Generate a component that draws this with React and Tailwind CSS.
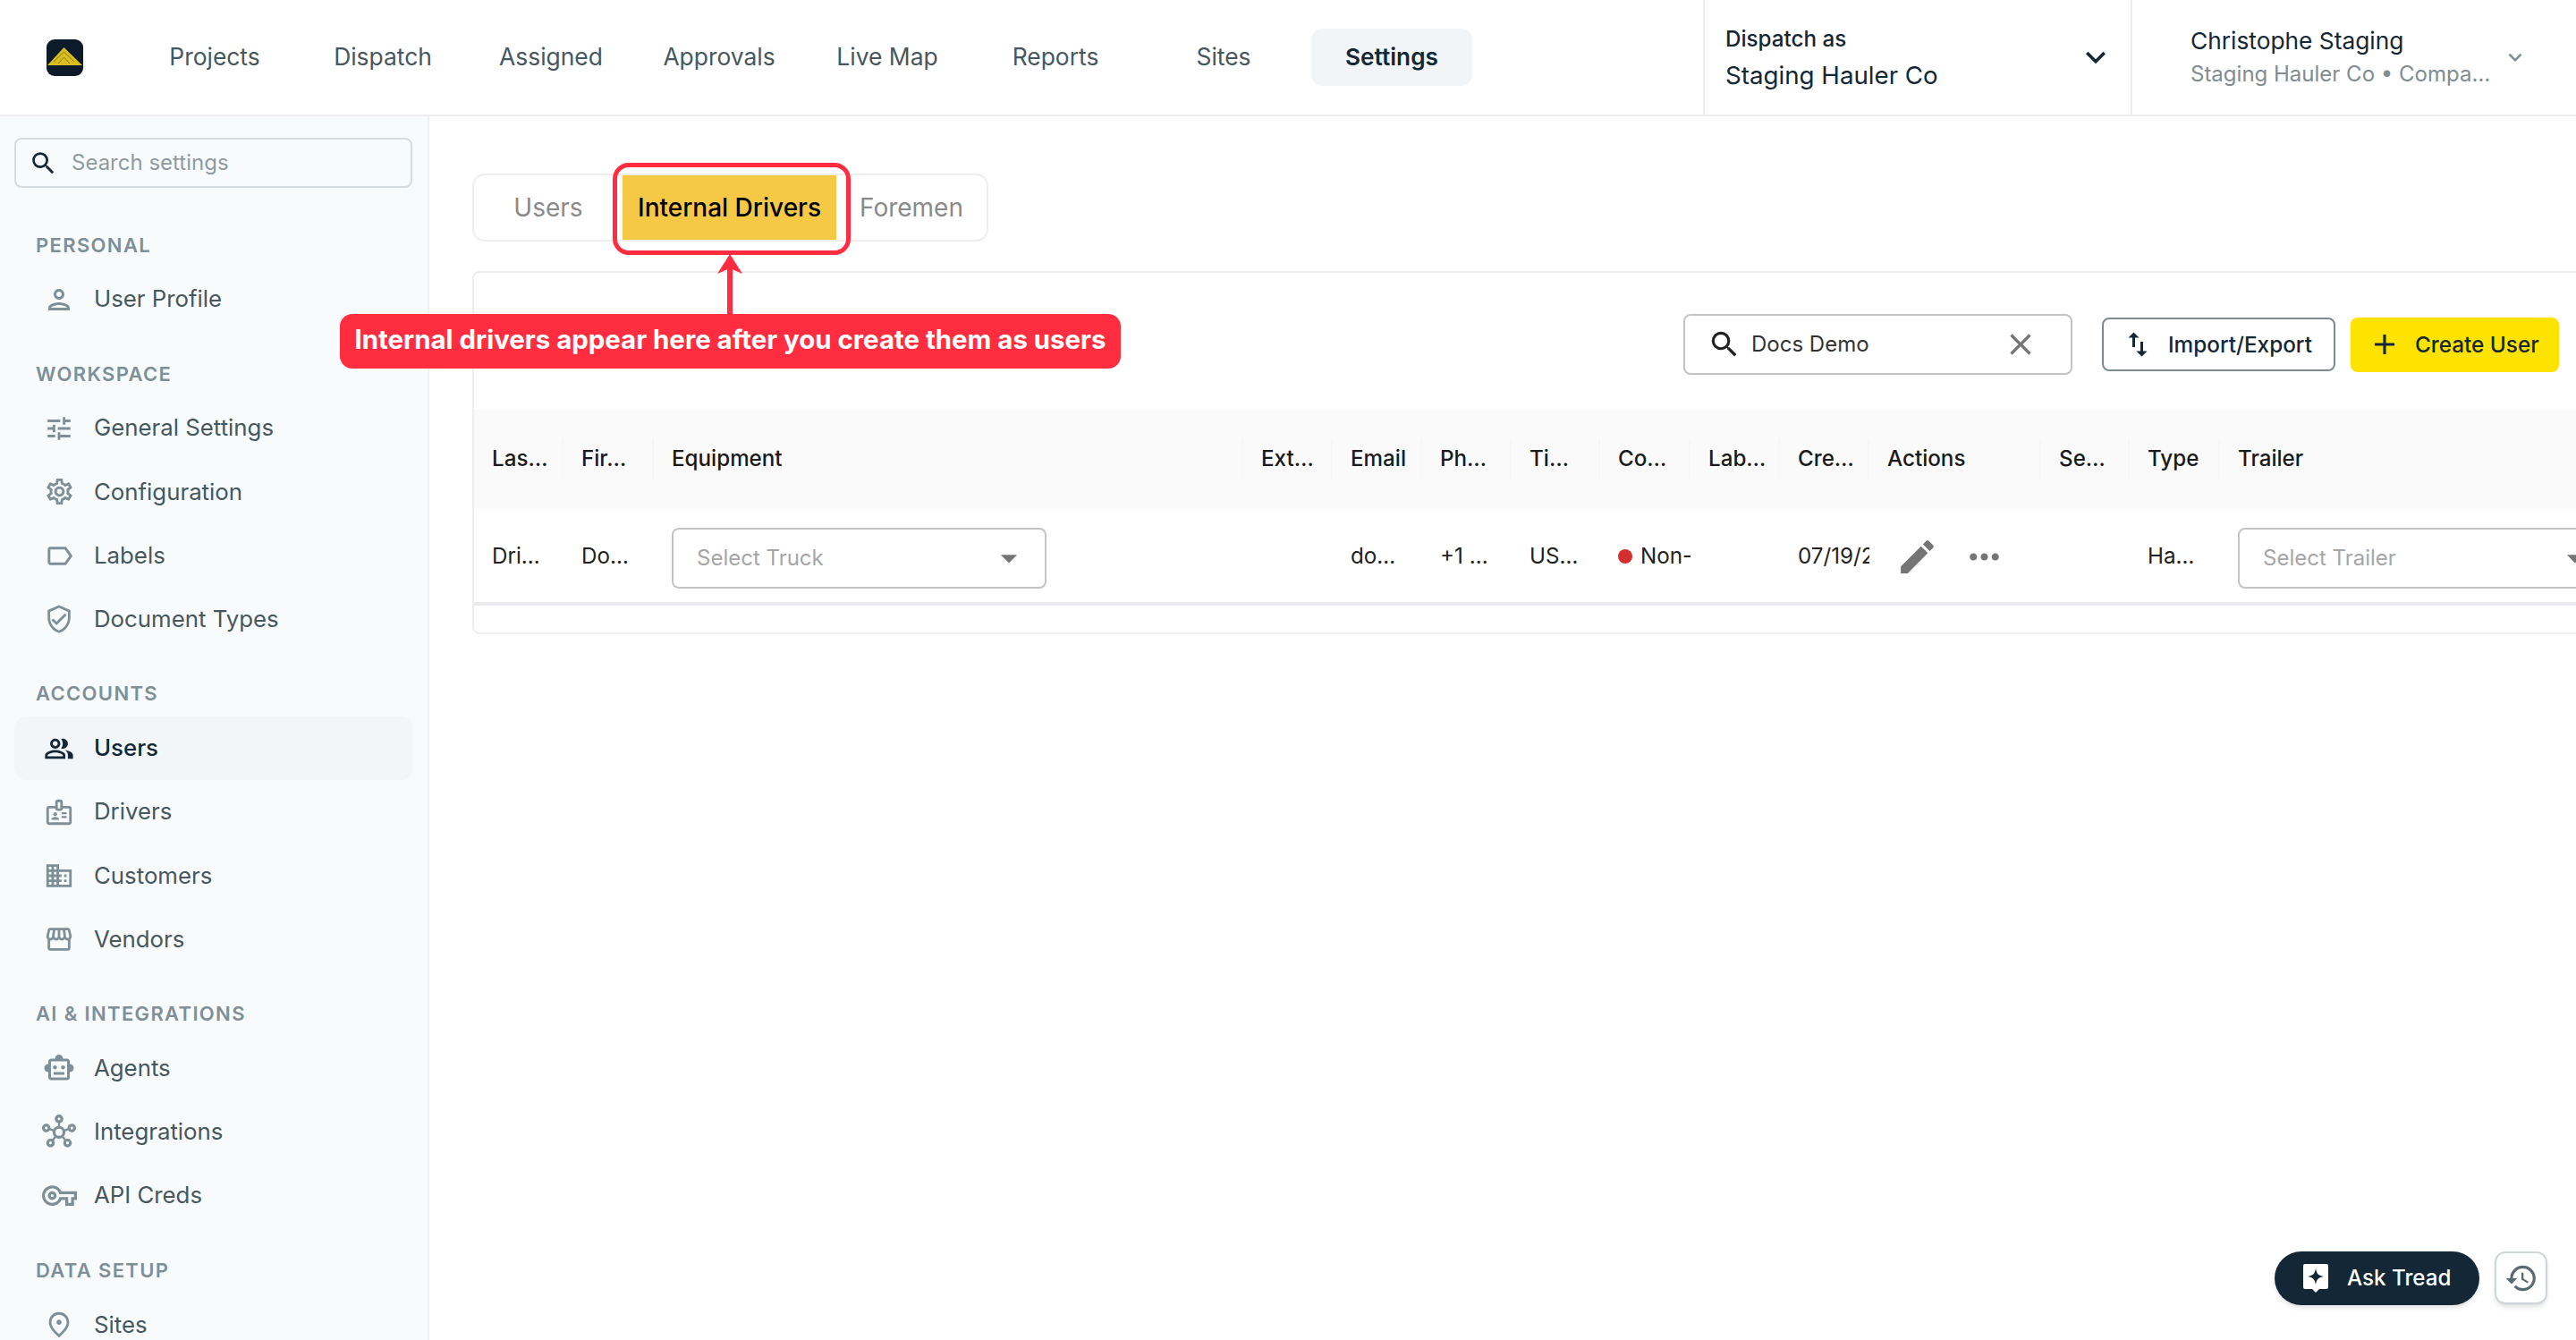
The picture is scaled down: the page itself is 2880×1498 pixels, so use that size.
import React from 'react';
import {
  MdOutlinePerson, MdOutlineTune, MdOutlineSettings, MdOutlineLabel, MdOutlineVerifiedUser,
  MdOutlinePeopleAlt, MdOutlineBadge, MdDomain, MdOutlineStorefront, MdOutlineSmartToy,
  MdOutlineHub, MdOutlineVpnKey, MdOutlinePlace, MdSearch, MdClose, MdAdd, MdImportExport,
  MdArrowDropDown, MdEdit, MdMoreHoriz, MdHistory, MdKeyboardArrowDown,
} from 'react-icons/md';

const NAV = ['Projects', 'Dispatch', 'Assigned', 'Approvals', 'Live Map', 'Reports', 'Sites', 'Settings'];

const SECTIONS = [
  { title: 'PERSONAL', items: [{ label: 'User Profile', icon: MdOutlinePerson, size: 'size-[36px]' }] },
  {
    title: 'WORKSPACE',
    items: [
      { label: 'General Settings', icon: MdOutlineTune },
      { label: 'Configuration', icon: MdOutlineSettings, size: 'size-[35px]' },
      { label: 'Labels', icon: MdOutlineLabel, size: 'size-[35px]' },
      { label: 'Document Types', icon: MdOutlineVerifiedUser },
    ],
  },
  {
    title: 'ACCOUNTS',
    items: [
      { label: 'Users', icon: MdOutlinePeopleAlt, active: true },
      { label: 'Drivers', icon: MdOutlineBadge },
      { label: 'Customers', icon: MdDomain },
      { label: 'Vendors', icon: MdOutlineStorefront },
    ],
  },
  {
    title: 'AI & INTEGRATIONS',
    items: [
      { label: 'Agents', icon: MdOutlineSmartToy, size: 'size-[36px]' },
      { label: 'Integrations', icon: MdOutlineHub, size: 'size-[38px]' },
      { label: 'API Creds', icon: MdOutlineVpnKey, size: 'size-[39px]' },
    ],
  },
  { title: 'DATA SETUP', items: [{ label: 'Sites', icon: MdOutlinePlace }] },
];

const COLS = [
  { head: 'Las…', w: 'w-[100px]', cell: 'Dri…' },
  { head: 'Fir…', w: 'w-[101px]', cell: 'Do…' },
  { head: 'Equipment', w: 'w-[659px]', select: 'Select Truck' },
  { head: 'Ext…', w: 'w-[100px]' },
  { head: 'Email', w: 'w-[100px]', cell: 'do…' },
  { head: 'Ph…', w: 'w-[100px]', cell: '+1 …' },
  { head: 'Ti…', w: 'w-[99px]', cell: 'US…' },
  { head: 'Co…', w: 'w-[101px]', status: 'Non-compliant' },
  { head: 'Lab…', w: 'w-[100px]' },
  { head: 'Cre…', w: 'w-[100px]', clip: '07/19/2025' },
  { head: 'Actions', w: 'w-[192px]', actions: true },
  { head: 'Se…', w: 'w-[99px]' },
  { head: 'Type', w: 'w-[101px]', cell: 'Ha…' },
  { head: 'Trailer', w: 'w-[460px]', select: 'Select Trailer', last: true },
];

function SelectBox({ text }) {
  return (
    <div className="flex h-[68px] w-[419px] shrink-0 items-center justify-between rounded-[8px] border-2 border-[#c4c4c4] pl-[26px] pr-[18px]">
      <span className="text-[24px] text-[#a6a6a6]">{text}</span>
      <MdArrowDropDown className="size-[44px] text-[#757575]" />
    </div>
  );
}

function BodyCell({ col }) {
  if (col.select) return <div className={`${col.w} shrink-0 pl-[20px]`}><SelectBox text={col.select} /></div>;
  if (col.actions) {
    return (
      <div className={`${col.w} -mt-[2px] flex shrink-0 items-center gap-[26px] pl-[29px]`}>
        <MdEdit className="size-[49px] text-[#757575]" />
        <MdMoreHoriz className="size-[49px] text-[#757575]" />
      </div>
    );
  }
  if (col.status) {
    return (
      <div className={`${col.w} -mt-[2px] flex shrink-0 items-center gap-[9px] overflow-hidden whitespace-nowrap pl-[20px] text-[24.2px] text-[#222]`}>
        <span className="size-[16px] shrink-0 rounded-full bg-[#d32f2f]" />
        <span>{col.status}</span>
      </div>
    );
  }
  return (
    <div className={`${col.w} -mt-[2px] shrink-0 overflow-hidden whitespace-nowrap pl-[20px] text-[24.2px] text-[#222]`}>
      {col.cell || col.clip}
    </div>
  );
}

export default function App() {
  return (
    <div className="relative flex h-screen w-screen flex-col overflow-hidden bg-white font-['Inter',sans-serif]">
      {/* top bar */}
      <header className="flex h-[130px] shrink-0 items-stretch border-b-2 border-[#eeeeee]">
        <div className="flex items-center pl-[52px]">
          <div className="flex h-[41px] w-[41px] items-center justify-center rounded-[9px] bg-[#0c1a2a]">
            <svg viewBox="0 0 41 41" className="size-full">
              <path d="M19.5 9 L40 29 L1 29 Z" fill="#d9bd1e" />
              <path d="M19.5 14 L31 25 M19.5 14 L8 25 M19.5 20 L26 27 M19.5 20 L13 27" stroke="#8f7d12" strokeWidth="1" fill="none" />
            </svg>
          </div>
        </div>
        <nav className="ml-[53px] flex items-center">
          {NAV.map((n) => (
            <div key={n} className="flex w-[188px] justify-center">
              {n === 'Settings' ? (
                <span className="flex h-[64px] w-[180px] items-center justify-center rounded-[12px] bg-[#f1f5f8] text-[26.2px] font-semibold text-[#132736]">{n}</span>
              ) : (
                <span className="text-[26.4px] text-[#46575f]">{n}</span>
              )}
            </div>
          ))}
        </nav>
        <div className="ml-auto flex w-[480px] items-center border-x-2 border-[#eeeeee] pl-[23px] pr-[17px]">
          <div className="flex-1">
            <div className="mt-[1px] text-[24.2px] font-medium leading-[30px] text-[#132736]">Dispatch as</div>
            <div className="mt-[8px] text-[27.7px] leading-[34px] text-[#132736]">Staging Hauler Co</div>
          </div>
          <MdKeyboardArrowDown className="size-[44px] text-[#132736]" />
        </div>
        <div className="flex w-[496px] items-center pl-[65px]">
          <div className="w-[340px]">
            <div className="text-[26.3px] leading-[32px] text-[#132736]">Christophe Staging</div>
            <div className="mt-[6px] whitespace-nowrap text-[24px] leading-[30px] text-[#7f8c92]">Staging Hauler Co • Compa…</div>
          </div>
          <MdKeyboardArrowDown className="ml-[8px] size-[30px] text-[#7f8c92]" />
        </div>
      </header>

      <div className="flex min-h-0 flex-1">
        {/* settings sidebar */}
        <aside className="w-[480px] shrink-0 overflow-hidden border-r-2 border-[#eef0f1] bg-[#f8fbfc] px-[16px] pt-[24px]">
          <div className="flex h-[56px] w-[445px] items-center rounded-[8px] border-2 border-[#d5dcdf] pl-[14px]">
            <MdSearch className="size-[33px] text-[#132736]" />
            <span className="ml-[15px] text-[24px] text-[#8f9ba1]">Search settings</span>
          </div>
          <div className="mt-[17px]">
            {SECTIONS.map((s, i) => (
              <section key={s.title} className={i === 0 ? 'mt-[39px]' : 'mt-[23px]'}>
                <div className="flex h-[50px] items-center pl-[24px] text-[22px] font-semibold tracking-[1.35px] text-[#7f8f97]">{s.title}</div>
                {s.items.map((it) => {
                  const Icon = it.icon;
                  return (
                    <div
                      key={it.label}
                      className={`flex h-[71.2px] items-center rounded-[14px] pl-[33px] ${it.active ? 'bg-[#f2f6f9] text-[#132736]' : 'text-[#46575f]'}`}
                    >
                      <span className="flex w-[34px] shrink-0 justify-center">
                        <Icon className={`${it.size || 'size-[34px]'} shrink-0 ${it.active ? 'text-[#132736]' : 'text-[#7f8f97]'}`} />
                      </span>
                      <span className={`ml-[22px] text-[25.8px] ${it.active ? 'font-medium' : ''}`}>{it.label}</span>
                    </div>
                  );
                })}
              </section>
            ))}
          </div>
        </aside>

        {/* content */}
        <main className="min-w-0 flex-1 overflow-hidden pl-[48px] pt-[64px]">
          <div className="flex h-[76px] w-[577px] items-stretch rounded-[14px] border-2 border-[#eeeeee]">
            <div className="flex w-[166px] items-center justify-center text-[28px] text-[#8a8a8a]">Users</div>
            <div className="flex w-[239px] items-center justify-center bg-[#f5c945] text-[28px] font-medium text-black">Internal Drivers</div>
            <div className="flex flex-1 items-center justify-center text-[28px] text-[#8a8a8a]">Foremen</div>
          </div>

          <div className="mt-[33px] w-[2500px] rounded-[8px] border-2 border-[#eeeeee]">
            <div className="flex h-[153px] w-[2331px] items-center justify-end pt-[7px]">
              <div className="flex h-[68px] w-[435px] items-center rounded-[8px] border-2 border-[#c4c4c4] pl-[25px] pr-[36px]">
                <MdSearch className="size-[38px] text-[#222]" />
                <span className="ml-[11px] flex-1 text-[24px] text-[#333]">Docs Demo</span>
                <MdClose className="size-[40px] text-[#757575]" />
              </div>
              <div className="ml-[33px] flex h-[60px] w-[261px] items-center rounded-[8px] border-2 border-[#7b8a8f] pl-[20px]">
                <MdImportExport className="size-[36px] text-[#132736]" />
                <span className="ml-[16px] text-[24.3px] font-medium text-[#132736]">Import/Export</span>
              </div>
              <div className="ml-[17px] flex h-[61px] w-[233px] items-center rounded-[8px] bg-[#ffe300] pl-[19px]">
                <MdAdd className="size-[38px] text-[#132736]" />
                <span className="ml-[15px] text-[24.3px] font-medium text-[#132736]">Create User</span>
              </div>
            </div>

            <div className="flex h-[111px] items-center bg-[#fafafa]">
              {COLS.map((c) => (
                <div
                  key={c.head}
                  className={`${c.w} flex h-[47px] shrink-0 items-center whitespace-nowrap pl-[20px] text-[24.2px] font-medium text-[#1a1a1a] ${c.last ? '' : 'border-r-2 border-[#f6f6f6]'}`}
                >
                  {c.head}
                </div>
              ))}
            </div>
            <div className="flex h-[108px] items-center border-b-4 border-[#eaeaee] pt-[5px]">
              {COLS.map((c) => <BodyCell key={c.head} col={c} />)}
            </div>
            <div className="h-[30px]" />
          </div>
        </main>
      </div>

      {/* annotation overlay */}
      <div className="absolute left-[685px] top-[182px] h-[103px] w-[266px] rounded-[18px] border-[5px] border-[#ff2d3f]" />
      <svg className="absolute left-[796px] top-[282px]" width="40" height="72" viewBox="0 0 40 72">
        <path d="M20 6 V72" stroke="#ff2d3f" strokeWidth="6" fill="none" />
        <path d="M20 2 L34 24 L20 18 L6 24 Z" fill="#ff2d3f" />
      </svg>
      <div className="absolute left-[380px] top-[351px] flex h-[61px] w-[873px] items-center justify-center rounded-[14px] bg-[#ff2d3f] pb-[2px] text-[29.4px] font-bold text-white">
        Internal drivers appear here after you create them as users
      </div>

      {/* assistant */}
      <div className="absolute left-[2543px] top-[1399px] flex h-[60px] w-[229px] items-center rounded-full bg-[#132736] pl-[32px] shadow-md">
        <svg width="28" height="33" viewBox="0 0 28 33">
          <path d="M2 0 H26 A2 2 0 0 1 28 2 V26 A2 2 0 0 1 26 28 H18 L14 32 L10 28 H2 A2 2 0 0 1 0 26 V2 A2 2 0 0 1 2 0 Z" fill="#fff" />
          <path d="M14 5 C15 11 17 13 23 14 C17 15 15 17 14 23 C13 17 11 15 5 14 C11 13 13 11 14 5 Z" fill="#132736" />
        </svg>
        <span className="ml-[21px] text-[24.2px] font-medium text-white">Ask Tread</span>
      </div>
      <div className="absolute left-[2789px] top-[1399px] flex size-[59px] items-center justify-center rounded-[12px] border-2 border-[#cfd6da] bg-white shadow-md">
        <MdHistory className="size-[38px] text-[#5a6a72]" />
      </div>
    </div>
  );
}
